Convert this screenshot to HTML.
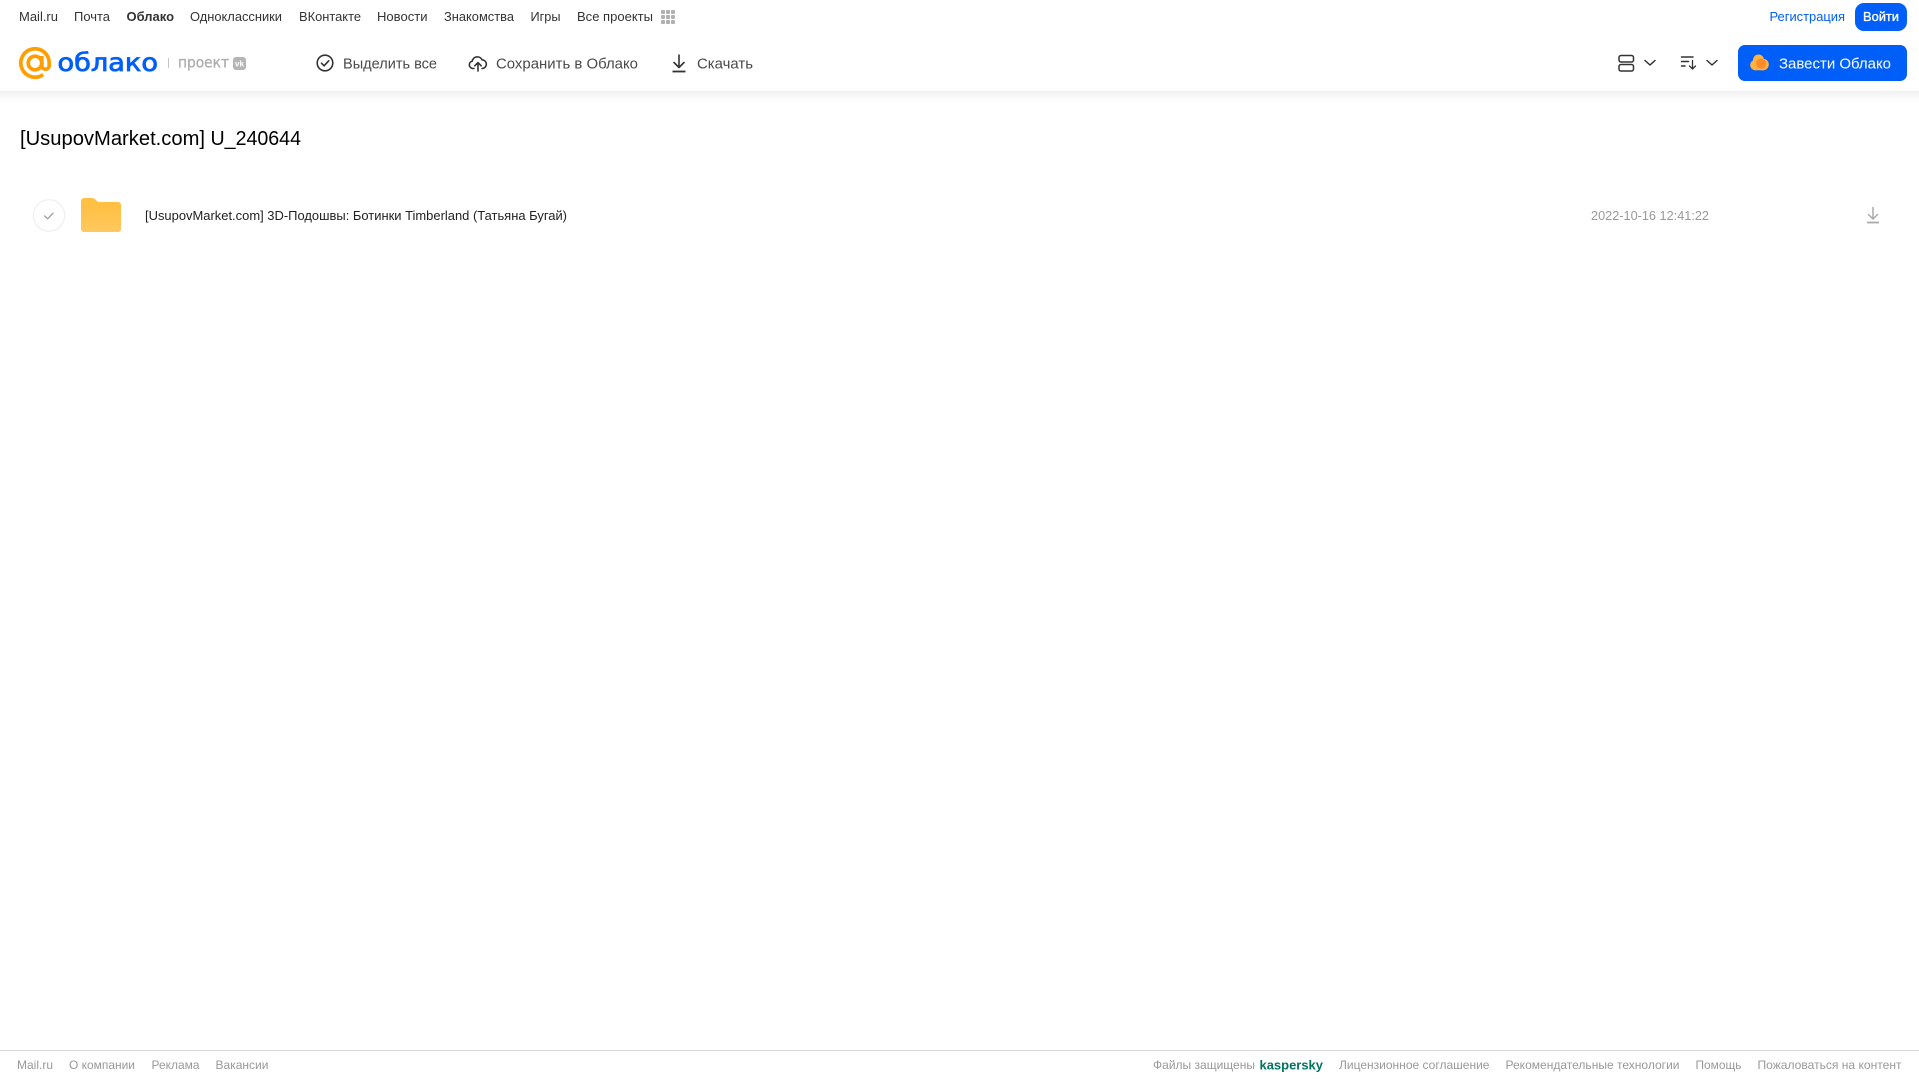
<!DOCTYPE html>
<html lang="ru">
<head>
<meta charset="utf-8">
<title>[UsupovMarket.com] U_240644</title>
<style>
html,body{margin:0;padding:0;width:1919px;height:1079px;overflow:hidden;background:#fff}
svg{display:block}
text{font-family:"Liberation Sans",sans-serif;}
.nav{font-size:13px;fill:#333}
.tool{font-size:15px;fill:#4a4a4a}
.foot{font-size:12px;fill:#999}
</style>
</head>
<body>
<svg width="1919" height="1079" viewBox="0 0 1919 1079" xmlns="http://www.w3.org/2000/svg">
<defs>
<linearGradient id="sh" x1="0" y1="0" x2="0" y2="1"><stop offset="0" stop-color="#f1f1f1"/><stop offset="1" stop-color="#fff"/></linearGradient>
<linearGradient id="fo" x1="0" y1="0" x2="0" y2="1"><stop offset="0" stop-color="#ffc043"/><stop offset="1" stop-color="#ffc95f"/></linearGradient>
</defs>
<rect width="1919" height="1079" fill="#fff"/>
<rect x="0" y="91" width="1919" height="11" fill="url(#sh)"/>

<!-- top nav -->
<g class="nav">
<text x="19" y="21" textLength="39" lengthAdjust="spacingAndGlyphs">Mail.ru</text>
<text x="74" y="21" textLength="36" lengthAdjust="spacingAndGlyphs">Почта</text>
<text x="126.500" y="21" textLength="47.500" lengthAdjust="spacingAndGlyphs" font-weight="700">Облако</text>
<text x="190" y="21" textLength="92" lengthAdjust="spacingAndGlyphs">Одноклассники</text>
<text x="299" y="21" textLength="62" lengthAdjust="spacingAndGlyphs">ВКонтакте</text>
<text x="377" y="21" textLength="50.500" lengthAdjust="spacingAndGlyphs">Новости</text>
<text x="444" y="21" textLength="70" lengthAdjust="spacingAndGlyphs">Знакомства</text>
<text x="530.500" y="21" textLength="30" lengthAdjust="spacingAndGlyphs">Игры</text>
<text x="577" y="21" textLength="76" lengthAdjust="spacingAndGlyphs">Все проекты</text>
</g>
<g fill="#b0b0b0">
<rect x="661" y="10" width="4" height="4" rx="1"/><rect x="666" y="10" width="4" height="4" rx="1"/><rect x="671" y="10" width="4" height="4" rx="1"/>
<rect x="661" y="15" width="4" height="4" rx="1"/><rect x="666" y="15" width="4" height="4" rx="1"/><rect x="671" y="15" width="4" height="4" rx="1"/>
<rect x="661" y="20" width="4" height="4" rx="1"/><rect x="666" y="20" width="4" height="4" rx="1"/><rect x="671" y="20" width="4" height="4" rx="1"/>
</g>
<text x="1769.500" y="21" font-size="13" fill="#005ff9" textLength="75.500" lengthAdjust="spacingAndGlyphs">Регистрация</text>
<rect x="1855" y="3" width="52" height="28" rx="9" fill="#005ff9"/>
<text x="1863" y="21" font-size="13" fill="#fff" stroke="#fff" stroke-width=".35" textLength="36" lengthAdjust="spacingAndGlyphs">Войти</text>

<!-- logo -->
<g fill="none" stroke="#ff9e00" stroke-width="3.700">
<circle cx="35" cy="63" r="6.800"/>
<path d="M41.800 56v9.500a3.600 3.600 0 0 0 7.400 0V63a14.200 14.200 0 1 0-6 11.600"/>
</g>
<text x="57.500" y="71" font-size="25" fill="#005ff9" stroke="#005ff9" stroke-width=".8" style='font-family:"DejaVu Sans",sans-serif' textLength="100.500" lengthAdjust="spacingAndGlyphs">облако</text>
<rect x="168" y="58" width="1" height="10" fill="#c4c4c4"/>
<text x="178" y="67.500" font-size="15" fill="#adadad" stroke="#adadad" stroke-width=".3" style='font-family:"DejaVu Sans",sans-serif' textLength="51" lengthAdjust="spacingAndGlyphs">проект</text>
<rect x="233" y="57" width="13" height="13" rx="3" fill="#b5b5b5"/>
<text x="235" y="66.500" font-size="8" font-weight="700" fill="#fff" textLength="9" lengthAdjust="spacingAndGlyphs">vk</text>

<!-- toolbar -->
<g fill="none" stroke="#333" stroke-width="1.600" stroke-linecap="round" stroke-linejoin="round">
<circle cx="325" cy="63" r="7.800"/>
<path d="M321.500 63.200l2.600 2.600 4.600-5"/>
<path d="M474 68.500h-1.200a3.700 3.700 0 0 1-.6-7.300 5.200 5.200 0 0 1 9.800-1.400 4.400 4.400 0 0 1 .9 8.700h-.9"/>
<path d="M478 71v-8M474.800 65.800l3.200-3.200 3.200 3.200"/>
<path d="M679 55v12.500M674 62.500l5 5 5-5"/>
<path d="M672.500 71.500h13" stroke-width="1.800" stroke-linecap="butt"/>
</g>
<g class="tool">
<text x="343" y="68.500" textLength="94" lengthAdjust="spacingAndGlyphs">Выделить все</text>
<text x="496" y="68.500" textLength="142" lengthAdjust="spacingAndGlyphs">Сохранить в Облако</text>
<text x="697" y="68.500" textLength="56" lengthAdjust="spacingAndGlyphs">Скачать</text>
</g>

<!-- view/sort -->
<g fill="none" stroke="#333" stroke-width="1.500" stroke-linecap="round" stroke-linejoin="round">
<rect x="1619" y="55.500" width="14.500" height="6.500" rx="2"/>
<rect x="1619" y="64.500" width="14.500" height="6.500" rx="2"/>
<path d="M1645 60.500l5 4.500 5-4.500"/>
<path d="M1681.500 57h11.500M1681.500 61.500h7M1681.500 66h3.500"/>
<path d="M1692.500 60.500v8.500M1689.500 66l3 3 3-3" stroke-width="1.300"/>
<path d="M1707 60.500l5 4.500 5-4.500"/>
</g>

<!-- CTA -->
<rect x="1738" y="45" width="169" height="36" rx="7" fill="#005ff9"/>
<g>
<circle cx="1755.500" cy="65" r="5.300" fill="#ffb23f"/>
<circle cx="1758.500" cy="60" r="5.500" fill="#ffb23f"/>
<circle cx="1763" cy="64.500" r="5.800" fill="#ffb23f"/>
<rect x="1752" y="64" width="14" height="6.300" rx="3" fill="#ffb23f"/>
<circle cx="1761" cy="63.500" r="5" fill="#ff8a2b"/>
</g>
<text x="1779" y="68.500" font-size="15" fill="#fff" textLength="112" lengthAdjust="spacingAndGlyphs">Завести Облако</text>

<!-- title -->
<text x="20" y="145" font-size="20" fill="#000" textLength="185" lengthAdjust="spacingAndGlyphs">[UsupovMarket.com]</text>
<text x="210.500" y="145" font-size="20" fill="#000" textLength="90.500" lengthAdjust="spacingAndGlyphs">U_240644</text>

<!-- row -->
<circle cx="49" cy="215.500" r="15.700" fill="#fff" stroke="#ececec" stroke-width="1"/>
<path d="M44.600 216l3 2.800 5.400-5.600" fill="none" stroke="#a0a0a0" stroke-width="1.400" stroke-linecap="round" stroke-linejoin="round"/>
<path d="M81 201a3 3 0 0 1 3-3h7.500c2.500 0 3.500 1 5 2.500 1 1 1.500 1.500 3 1.500h18.500a3 3 0 0 1 3 3v24a3 3 0 0 1-3 3H84a3 3 0 0 1-3-3z" fill="#ffc044"/>
<path d="M81 208c0-1.500 1-2.500 2.500-2.500h35c1.500 0 2.500 1 2.500 2.500v21a3 3 0 0 1-3 3H84a3 3 0 0 1-3-3z" fill="url(#fo)"/>
<text x="145" y="220" font-size="13" fill="#222" textLength="422" lengthAdjust="spacingAndGlyphs">[UsupovMarket.com] 3D-Подошвы: Ботинки Timberland (Татьяна Бугай)</text>
<text x="1591" y="220" font-size="12.500" fill="#999" textLength="118" lengthAdjust="spacingAndGlyphs">2022-10-16 12:41:22</text>
<g fill="none" stroke="#aaa" stroke-width="1.500" stroke-linecap="round" stroke-linejoin="round">
<path d="M1873 207.500v11.500M1868.500 214.500l4.500 4.500 4.500-4.500"/>
<path d="M1867 222.500h12" stroke-linecap="butt" stroke-width="1.800"/>
</g>

<!-- footer -->
<rect x="0" y="1050" width="1919" height="1" fill="#d8d8d8"/>
<g class="foot">
<text x="17" y="1069" textLength="36" lengthAdjust="spacingAndGlyphs">Mail.ru</text>
<text x="69" y="1069" textLength="66" lengthAdjust="spacingAndGlyphs">О компании</text>
<text x="151.500" y="1069" textLength="48" lengthAdjust="spacingAndGlyphs">Реклама</text>
<text x="215.500" y="1069" textLength="53" lengthAdjust="spacingAndGlyphs">Вакансии</text>
<text x="1153" y="1069" textLength="102" lengthAdjust="spacingAndGlyphs">Файлы защищены</text>
<text x="1339" y="1069" textLength="150.500" lengthAdjust="spacingAndGlyphs">Лицензионное соглашение</text>
<text x="1505.500" y="1069" textLength="174" lengthAdjust="spacingAndGlyphs">Рекомендательные технологии</text>
<text x="1695.500" y="1069" textLength="46" lengthAdjust="spacingAndGlyphs">Помощь</text>
<text x="1757.500" y="1069" textLength="144" lengthAdjust="spacingAndGlyphs">Пожаловаться на контент</text>
</g>
<text x="1259.500" y="1069.500" font-size="13" font-weight="700" fill="#00745f" textLength="63.500" lengthAdjust="spacingAndGlyphs">kaspersky</text>
</svg>
</body>
</html>
